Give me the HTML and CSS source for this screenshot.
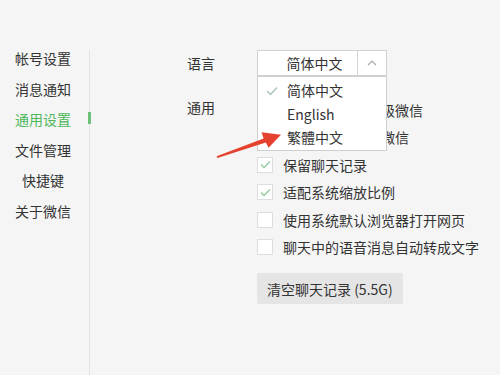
FILE: index.html
```html
<!DOCTYPE html>
<html lang="zh-CN">
<head>
  <meta charset="UTF-8" />
  <title>通用设置</title>
  <link rel="stylesheet" href="styles.css">
</head>
<body>
  <div class="settings">
    <div class="sidebar">
      <div class="nav-item">帐号设置</div>
      <div class="nav-item">消息通知</div>
      <div class="nav-item active">通用设置</div>
      <div class="nav-item">文件管理</div>
      <div class="nav-item">快捷键</div>
      <div class="nav-item">关于微信</div>
    </div>
    <div class="rail"><div class="rail-mark"></div></div>

    <div class="main">
      <div class="lang-row">
        <div class="label">语言</div>
        <div class="select">
          <div class="select-value">简体中文</div>
          <div class="select-btn">
            <svg width="12" height="8" viewBox="0 0 12 8"><path d="M2 6 L6 2 L10 6" fill="none" stroke="#a8a8a8" stroke-width="1.2"/></svg>
          </div>
          <div class="dropdown">
            <div class="option">
              <svg class="option-check" width="12" height="10" viewBox="0 0 12 10"><path d="M1 5 L4.5 8.5 L11 1.5" fill="none" stroke="#a9c4b3" stroke-width="1.3"/></svg>
              简体中文
            </div>
            <div class="option">English</div>
            <div class="option">繁體中文</div>
          </div>
        </div>
      </div>

      <div class="general">
        <div class="label">通用</div>
        <div class="options">
          <div class="row"><span class="box"></span>有更新时自动升级微信</div>
          <div class="row"><span class="box"></span>开机时自动启动微信</div>
          <div class="row"><span class="box checked"><svg width="11" height="9" viewBox="0 0 11 9"><path d="M1 4.5 L4 7.5 L10 1.5" fill="none" stroke="#93c9a0" stroke-width="1.3"/></svg></span>保留聊天记录</div>
          <div class="row"><span class="box checked"><svg width="11" height="9" viewBox="0 0 11 9"><path d="M1 4.5 L4 7.5 L10 1.5" fill="none" stroke="#93c9a0" stroke-width="1.3"/></svg></span>适配系统缩放比例</div>
          <div class="row"><span class="box"></span>使用系统默认浏览器打开网页</div>
          <div class="row"><span class="box"></span>聊天中的语音消息自动转成文字</div>
          <button class="clear-btn">清空聊天记录 (5.5G)</button>
        </div>
      </div>
    </div>
  </div>

  <svg class="arrow" width="500" height="375" viewBox="0 0 500 375">
    <polygon points="216.6,156.2 263.6,138.6 261.6,132.2 281,134.8 268.6,147.8 265.8,142.4 217.4,158" fill="#e5412f"/>
  </svg>
</body>
</html>
```

FILE: styles.css
```css
* {
  margin: 0;
  padding: 0;
  box-sizing: border-box;
}
body {
  font-family: "Noto Sans CJK SC", "Noto Sans", sans-serif;
  background: #f5f5f5;
  color: #333;
  font-size: 14px;
  position: relative;
  width: 500px;
  height: 375px;
  overflow: hidden;
}
.settings {
  display: flex;
  height: 375px;
}
.sidebar {
  width: 86px;
  margin-right: 3px;
  padding-top: 43px;
}
.nav-item {
  height: 30.5px;
  line-height: 30.5px;
  text-align: center;
}
.nav-item.active {
  color: #4db75a;
}
.rail {
  margin-top: 50px;
  width: 1px;
  background: #e3e3e3;
}
.rail-mark {
  margin-top: 62px;
  margin-left: -1px;
  width: 3px;
  height: 12px;
  background: #6cc077;
}
.main {
  padding: 50px 0 0 97px;
  flex: 1;
}
.label {
  width: 70px;
  flex-shrink: 0;
}
.lang-row {
  display: flex;
  align-items: center;
  height: 26px;
}
.select {
  position: relative;
  display: flex;
  width: 130px;
  height: 26px;
  border: 1px solid #d2d2d2;
  background: #fff;
  z-index: 5;
}
.select-value {
  width: 100px;
  text-align: center;
  line-height: 24px;
  padding-left: 14px;
  border-right: 1px solid #d6d6d6;
}
.select-btn {
  flex: 1;
  display: flex;
  align-items: center;
  justify-content: center;
}
.dropdown {
  position: absolute;
  top: 25px;
  left: -1px;
  width: 130px;
  height: 75px;
  background: #fff;
  border: 1px solid #cfcfcf;
  padding-top: 2px;
}
.option {
  position: relative;
  height: 23.5px;
  line-height: 23.5px;
  padding-left: 29px;
}
.option-check {
  position: absolute;
  left: 8px;
  top: 7px;
}
.general {
  display: flex;
  margin-top: 20px;
}
.general .label {
  line-height: 22px;
}
.options {
  display: flex;
  flex-direction: column;
  align-items: flex-start;
}
.row {
  display: flex;
  align-items: center;
  height: 27.5px;
  white-space: nowrap;
}
.box {
  width: 16px;
  height: 16px;
  border: 1px solid #dedede;
  background: #fff;
  margin-right: 10px;
  display: flex;
  align-items: center;
  justify-content: center;
}
.clear-btn {
  margin-top: 12px;
  height: 31px;
  padding: 0 10px;
  border: none;
  border-radius: 2px;
  background: #e5e5e5;
  color: #333;
  font-family: inherit;
  font-size: 14px;
}
.arrow {
  position: absolute;
  left: 0;
  top: 0;
  pointer-events: none;
  z-index: 10;
}
```
